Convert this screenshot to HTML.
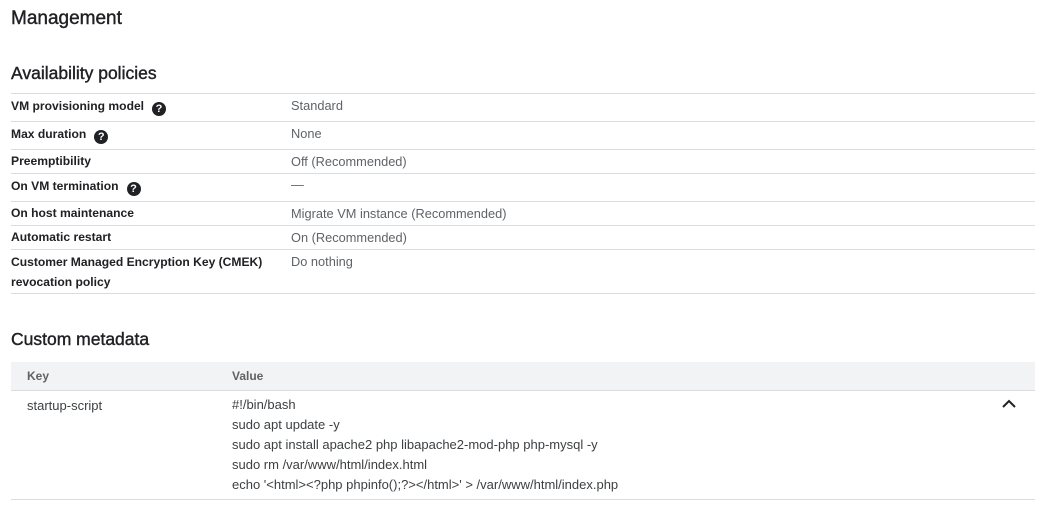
<!DOCTYPE html>
<html><head><style>
body{margin:0;width:1043px;height:516px;background:#fff;font-family:"Liberation Sans",Arial,sans-serif;position:relative;overflow:hidden}
.a{position:absolute;white-space:nowrap}
.h1{font-size:19px;color:#202124;left:11px;top:8px;-webkit-text-stroke:0.4px #202124}
.h2{font-size:17.5px;color:#202124;left:11px;-webkit-text-stroke:0.4px #202124}
.k{font-size:12.1px;color:#202124;left:11px;font-weight:bold}
.v{font-size:12.8px;color:#5f6368;left:291px}
.ln{position:absolute;left:11px;width:1024px;height:1px;background:#dadce0}
.q{display:inline-block;width:14px;height:14px;border-radius:50%;background:#202124;color:#fff;font-size:11px;font-weight:bold;text-align:center;line-height:14px;vertical-align:-2px;margin-left:8px}
.m{font-size:13px;color:#3c4043}
</style></head><body>
<div class="a h1" style="top:8px">Management</div>
<div class="a h2" style="top:63px">Availability policies</div>
<div class="ln" style="top:93px"></div>
<div class="a k" style="top:99px">VM provisioning model<span class="q">?</span></div><div class="a v" style="top:98px">Standard</div>
<div class="ln" style="top:121px"></div>
<div class="a k" style="top:127px">Max duration<span class="q">?</span></div><div class="a v" style="top:126px">None</div>
<div class="ln" style="top:149px"></div>
<div class="a k" style="top:154px">Preemptibility</div><div class="a v" style="top:154px">Off (Recommended)</div>
<div class="ln" style="top:173px"></div>
<div class="a k" style="top:179px">On VM termination<span class="q">?</span></div><div class="a v" style="top:177px">—</div>
<div class="ln" style="top:201px"></div>
<div class="a k" style="top:206px">On host maintenance</div><div class="a v" style="top:206px">Migrate VM instance (Recommended)</div>
<div class="ln" style="top:225px"></div>
<div class="a k" style="top:230px">Automatic restart</div><div class="a v" style="top:230px">On (Recommended)</div>
<div class="ln" style="top:249px"></div>
<div class="a k" style="top:252px;line-height:20px">Customer Managed Encryption Key (CMEK)<br>revocation policy</div><div class="a v" style="top:254px">Do nothing</div>
<div class="ln" style="top:293px"></div>
<div class="a h2" style="top:329px">Custom metadata</div>
<div style="position:absolute;left:11px;top:362px;width:1024px;height:28px;background:#f1f3f4;border-bottom:1px solid #dadce0"></div>
<div class="a" style="left:27px;top:369px;font-size:12px;font-weight:bold;color:#5f6368">Key</div>
<div class="a" style="left:232px;top:369px;font-size:12px;font-weight:bold;color:#5f6368">Value</div>
<div class="a m" style="left:27px;top:398px">startup-script</div>
<div class="a m" style="left:232px;top:395px;line-height:20px">#!/bin/bash<br>sudo apt update -y<br>sudo apt install apache2 php libapache2-mod-php php-mysql -y<br>sudo rm /var/www/html/index.html<br>echo '&lt;html&gt;&lt;?php phpinfo();?&gt;&lt;/html&gt;' &gt; /var/www/html/index.php</div>
<svg style="position:absolute;left:1001px;top:398px" width="16" height="12"><path d="M2 9 L8 3 L14 9" fill="none" stroke="#202124" stroke-width="2"/></svg>
<div class="ln" style="top:499px"></div>
</body></html>
